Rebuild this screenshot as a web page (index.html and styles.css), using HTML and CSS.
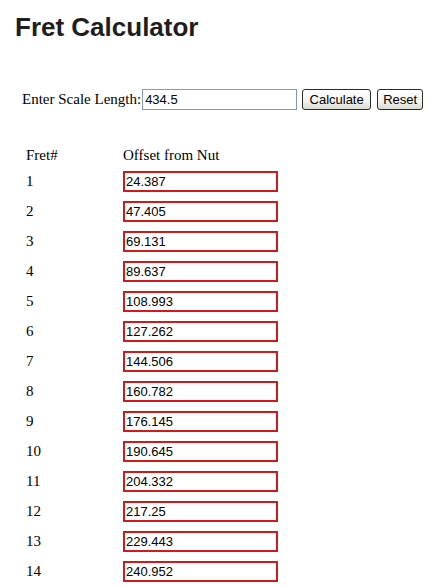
FILE: index.html
```html
<!DOCTYPE html>
<html>
<head>
<meta charset="utf-8">
<title>Fret Calculator</title>
<link rel="stylesheet" href="styles.css">
</head>
<body>
<div class="page">
  <h1 class="title">Fret Calculator</h1>
  <div class="form-row">
    <label class="label" for="scale">Enter Scale Length:</label>
    <input class="scale-input" id="scale" type="text" value="434.5">
    <button class="btn btn-calc" type="button">Calculate</button>
    <button class="btn btn-reset" type="button">Reset</button>
  </div>
  <div class="frets">
    <div class="fret-row head">
      <div class="col-num">Fret#</div>
      <div class="col-off">Offset from Nut</div>
    </div>
    <div class="fret-row"><div class="col-num">1</div><input class="off" type="text" value="24.387"></div>
    <div class="fret-row"><div class="col-num">2</div><input class="off" type="text" value="47.405"></div>
    <div class="fret-row"><div class="col-num">3</div><input class="off" type="text" value="69.131"></div>
    <div class="fret-row"><div class="col-num">4</div><input class="off" type="text" value="89.637"></div>
    <div class="fret-row"><div class="col-num">5</div><input class="off" type="text" value="108.993"></div>
    <div class="fret-row"><div class="col-num">6</div><input class="off" type="text" value="127.262"></div>
    <div class="fret-row"><div class="col-num">7</div><input class="off" type="text" value="144.506"></div>
    <div class="fret-row"><div class="col-num">8</div><input class="off" type="text" value="160.782"></div>
    <div class="fret-row"><div class="col-num">9</div><input class="off" type="text" value="176.145"></div>
    <div class="fret-row"><div class="col-num">10</div><input class="off" type="text" value="190.645"></div>
    <div class="fret-row"><div class="col-num">11</div><input class="off" type="text" value="204.332"></div>
    <div class="fret-row"><div class="col-num">12</div><input class="off" type="text" value="217.25"></div>
    <div class="fret-row"><div class="col-num">13</div><input class="off" type="text" value="229.443"></div>
    <div class="fret-row"><div class="col-num">14</div><input class="off" type="text" value="240.952"></div>
  </div>
</div>
</body>
</html>
```

FILE: styles.css
```css
html, body {
  margin: 0;
  padding: 0;
  background: #ffffff;
}

.page {
  padding-top: 12px;
  font-family: "Liberation Serif", "Times New Roman", serif;
  color: #000;
}

.title {
  margin: 0;
  padding-left: 15px;
  font-family: "Liberation Sans", Arial, sans-serif;
  font-size: 26px;
  font-weight: bold;
  line-height: 30px;
  color: #1e1e1e;
}

.form-row {
  display: flex;
  align-items: center;
  margin-top: 46px;
  padding-left: 22px;
  height: 22px;
}

.label {
  font-size: 15px;
  line-height: 22px;
  margin-right: 1px;
}

.scale-input {
  box-sizing: border-box;
  width: 155px;
  height: 21px;
  margin: 0;
  padding: 0 2px;
  border: 1px solid #7f9db9;
  font-family: "Liberation Sans", Arial, sans-serif;
  font-size: 13px;
  color: #000;
  background: #fff;
  outline: none;
}

.btn {
  box-sizing: border-box;
  height: 21px;
  margin: 0 0 0 5px;
  padding: 0;
  border: 1px solid #2b2b2b;
  border-radius: 3px;
  background: linear-gradient(#ffffff, #f2f2ee 60%, #dcdcd4);
  font-family: "Liberation Sans", Arial, sans-serif;
  font-size: 13px;
  color: #000;
}

.btn-calc {
  width: 69px;
}

.btn-reset {
  width: 46px;
  margin-left: 6px;
}

.frets {
  margin-top: 31px;
  padding-left: 26px;
  font-size: 15px;
}

.fret-row {
  display: flex;
  align-items: flex-start;
  height: 30px;
}

.fret-row.head {
  height: 26px;
  padding-top: 4px;
}

.col-num {
  width: 97px;
  line-height: 21px;
}

.col-off {
  line-height: 21px;
}

.off {
  box-sizing: border-box;
  width: 155px;
  height: 21px;
  margin: 0;
  padding: 0 2px 0 1px;
  border: 2px solid #d11a1a;
  font-family: "Liberation Sans", Arial, sans-serif;
  font-size: 13px;
  color: #000;
  background: #fff;
  outline: none;
}
```
